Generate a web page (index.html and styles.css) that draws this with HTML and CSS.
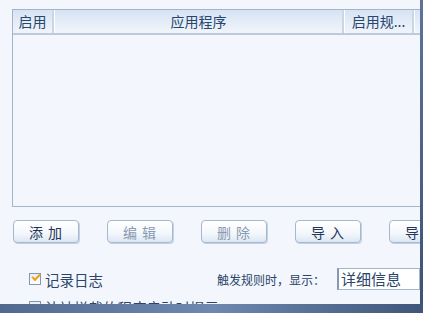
FILE: index.html
```html
<!DOCTYPE html>
<html lang="zh">
<head>
    <meta charset="UTF-8">
    <title>应用程序规则</title>
    <link rel="stylesheet" href="styles.css">
</head>
<body>
    <div class="frame">
        <div class="panel">
            <div class="list">
                <div class="list-head">
                    <div class="col col-on">启用</div>
                    <div class="col col-app">应用程序</div>
                    <div class="col col-rule">启用规...</div>
                    <div class="col col-rest"></div>
                </div>
            </div>
            <div class="buttons">
                <button class="btn">添 加</button>
                <button class="btn" disabled>编 辑</button>
                <button class="btn" disabled>删 除</button>
                <button class="btn">导 入</button>
                <button class="btn">导 出</button>
            </div>
            <div class="option-row">
                <label class="check"><span class="box on"></span>记录日志</label>
                <span class="hint">触发规则时，显示：</span>
                <div class="select">详细信息</div>
            </div>
            <div class="option-row second">
                <label class="check"><span class="box"></span>让被拦截的程序启动时提示</label>
            </div>
        </div>
        <div class="edge"></div>
    </div>
    <div class="taskbar"></div>
</body>
</html>
```

FILE: styles.css
```css
body {
    margin: 0;
    width: 423px;
    height: 313px;
    overflow: hidden;
    background: #f3f7fd;
    font-family: "Noto Sans CJK SC", "DejaVu Sans", sans-serif;
    color: #243c5e;
}
.frame {
    display: flex;
    height: 304px;
}
.panel {
    width: 420px;
    overflow: hidden;
    padding: 9px 0 0 12px;
    box-sizing: border-box;
}
.edge {
    width: 3px;
    background: linear-gradient(#5d7398, #3e5273);
}
.list {
    width: 420px;
    height: 198px;
    box-sizing: border-box;
    border: 1px solid #a3b4cb;
    background: #f3f7fd;
}
.list-head {
    display: flex;
    height: 23px;
    background: linear-gradient(#d6e3f3, #f1f5fb);
    border-bottom: 2px solid #bccadb;
}
.col {
    font-size: 14px;
    line-height: 23px;
    text-align: center;
    color: #27466f;
    border-right: 2px solid #c9d6e6;
    box-sizing: border-box;
    white-space: nowrap;
    border-left: 1px solid #ffffff;
}
.col-on { width: 41px; border-left: none; }
.col-app { width: 290px; }
.col-rule { width: 70px; }
.col-rest { flex: 1; border-right: none; }
.buttons {
    display: flex;
    gap: 28px;
    margin-top: 13px;
    padding-left: 1px;
}
.btn {
    flex: none;
    width: 66px;
    height: 23px;
    padding: 0;
    font-family: inherit;
    font-size: 14px;
    letter-spacing: 1px;
    color: #1f3658;
    border: 1px solid #a7b7cd;
    border-radius: 4px;
    background: linear-gradient(#ffffff, #f3f7fc 60%, #dbe6f3);
    box-shadow: 1px 1px 0 #c4d1e2;
}
.btn:disabled {
    color: #8a9ab1;
}
.option-row {
    display: flex;
    align-items: center;
    margin-top: 25px;
    height: 22px;
}
.check {
    display: flex;
    align-items: center;
    gap: 4px;
    margin-left: 17px;
    font-size: 14.5px;
    color: #2b4468;
    white-space: nowrap;
}
.box {
    width: 10px;
    height: 10px;
    border: 1px solid #8397b5;
    background: linear-gradient(#e6edf6, #ffffff);
    position: relative;
}
.box.on::after {
    content: "";
    position: absolute;
    left: 2px;
    top: 0px;
    width: 6px;
    height: 3px;
    border-left: 2px solid #f39c12;
    border-bottom: 2px solid #f39c12;
    transform: rotate(-45deg);
}
.hint {
    margin-left: 114px;
    font-size: 12px;
    color: #2b4468;
    white-space: nowrap;
}
.select {
    margin-left: 12px;
    width: 90px;
    height: 22px;
    box-sizing: border-box;
    border: 1px solid #a5b5ca;
    border-left: 2px solid #8598b4;
    background: #ffffff;
    font-size: 15px;
    line-height: 20px;
    padding-left: 2px;
    color: #2b4468;
    white-space: nowrap;
}
.option-row.second {
    margin-top: 6px;
}
.taskbar {
    position: fixed;
    left: 0;
    bottom: 0;
    width: 423px;
    height: 9px;
    background: linear-gradient(90deg, #52698f, #6f88b0 50%, #3f5679);
}
```
